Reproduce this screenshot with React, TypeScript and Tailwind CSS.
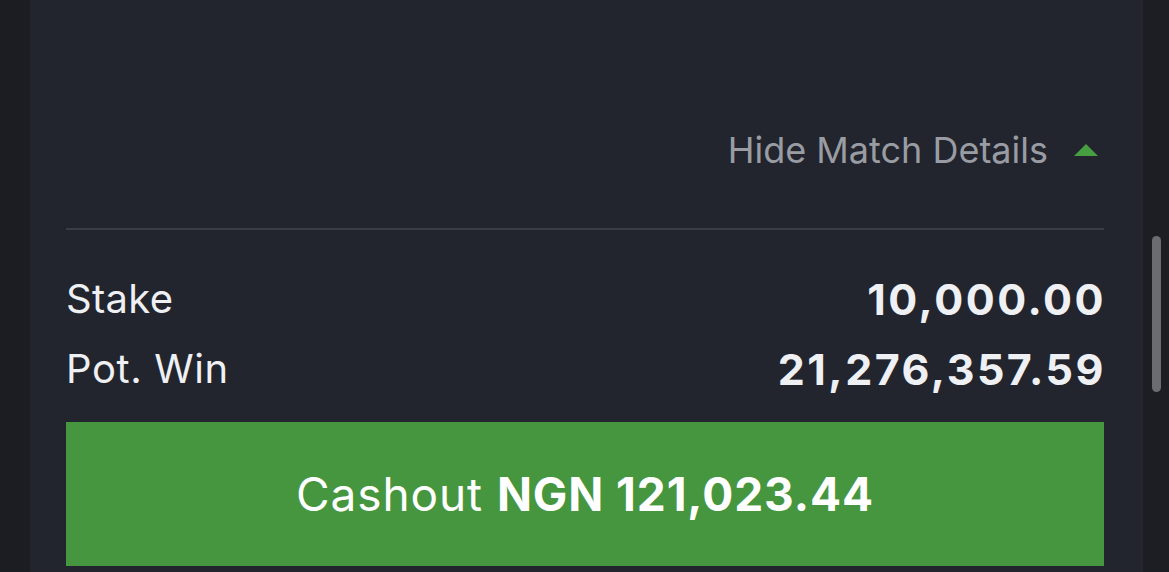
export default function App() {
  return (
    <div
      className="flex h-[572px] w-[1169px] overflow-hidden bg-[#1c1d22]"
      style={{ fontFamily: "Inter, 'Noto Sans', sans-serif" }}
    >
      {/* left gutter */}
      <div className="w-[30px] shrink-0 bg-[#1c1d22]" />

      {/* bet card */}
      <div className="flex w-[1110px] shrink-0 flex-col bg-[#22252d] px-[36px]">
        <div className="h-[120px]" />

        {/* toggle */}
        <div className="flex h-[60px] items-center justify-end pr-[6px]">
          <span className="text-[36px] text-[#9a9ca4]">Hide Match Details</span>
          <svg className="ml-[26px]" width="24" height="12" viewBox="0 0 24 12">
            <polygon points="12,0 24,12 0,12" fill="#46a041" />
          </svg>
        </div>

        <div className="mt-[48px] h-[2px] bg-[#393c44]" />

        {/* amounts */}
        <div className="mt-[34px] flex h-[70px] items-center justify-between text-[#eef0f4]">
          <span className="text-[40px] tracking-[0.3px]">Stake</span>
          <span className="-mr-[2px] text-[43px] font-bold tracking-[2.5px]">10,000.00</span>
        </div>
        <div className="flex h-[70px] items-center justify-between text-[#eef0f4]">
          <span className="text-[40px] tracking-[0.6px]">Pot. Win</span>
          <span className="-mr-[2px] text-[43px] font-bold tracking-[2.5px]">21,276,357.59</span>
        </div>

        <button className="mt-[18px] flex h-[144px] shrink-0 items-center justify-center bg-[#46963f] text-[46px] tracking-[0.9px] text-white">
          <span>
            Cashout <span className="font-bold">NGN 121,023.44</span>
          </span>
        </button>
      </div>

      {/* scroll track */}
      <div className="relative flex-1 border-l-[3px] border-[#25272d] bg-[#1d1e23]">
        <div className="absolute left-[9px] top-[236px] h-[156px] w-[9px] rounded-full bg-[#6b6c72]" />
      </div>
    </div>
  )
}
